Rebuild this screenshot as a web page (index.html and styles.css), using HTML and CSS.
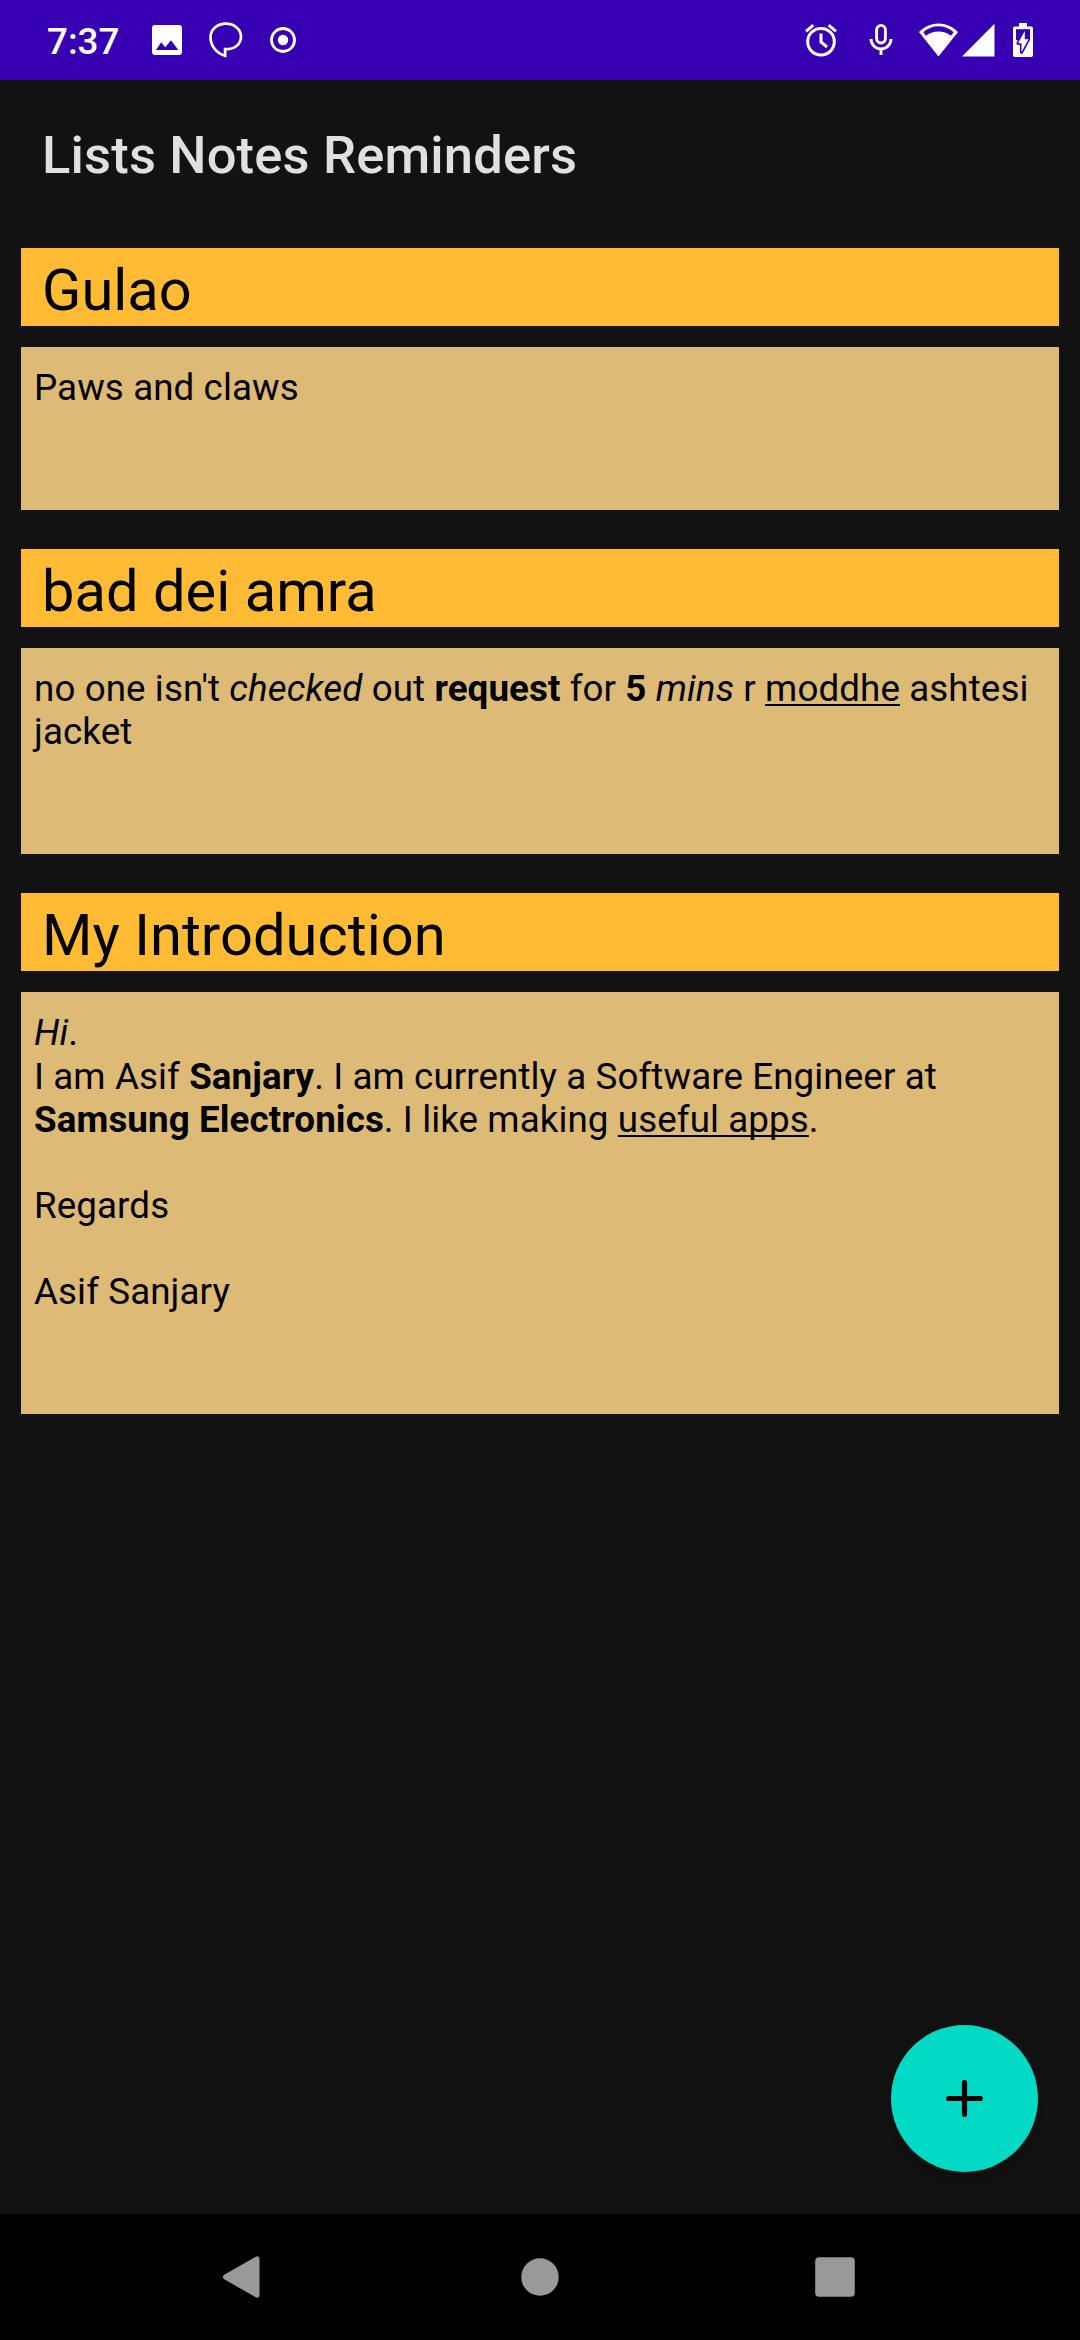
FILE: index.html
```html
<!DOCTYPE html>
<html lang="en">
<head>
<meta charset="utf-8">
<title>Lists Notes Reminders</title>
<link rel="stylesheet" href="styles.css">
</head>
<body>
<div class="screen">
  <header class="status">
    <span class="clock">7:37</span>
    <div class="status-left">
      <svg width="30" height="30" viewBox="0 0 30 30"><path fill="#fff" fill-rule="evenodd" d="M3 0h24A3 3 0 0 1 30 3v24a3 3 0 0 1-3 3H3A3 3 0 0 1 0 27V3a3 3 0 0 1 3-3zM4 25h22.300L19 15.200 13.300 22.300 9.200 17.300z"/></svg>
      <svg width="34" height="36" viewBox="0 0 34 36"><path fill="none" stroke="#fff" stroke-width="2.700" d="M17 1.700C8.500 1.700 1.500 7.500 1.500 15.200c0 8 5.500 16 14.600 18.600v-6.700C25.500 27.500 32 22.500 32 14.600 32 7.300 25.300 1.700 17 1.700z"/></svg>
      <svg width="26" height="26" viewBox="0 0 26 26"><circle cx="13" cy="13" r="11.500" fill="none" stroke="#fff" stroke-width="2.800"/><circle cx="13" cy="13" r="5.200" fill="#fff"/></svg>
    </div>
    <div class="status-right">
      <svg width="32" height="34" viewBox="0 0 32 34"><g fill="none" stroke="#fff" stroke-width="3"><circle cx="16" cy="18.700" r="13.300"/><path d="M1 8.300l7.300-6.200M31 8.300l-7.300-6.200M16 10.500v8.500l6 5"/></g></svg>
      <svg width="24" height="34" viewBox="0 0 24 34"><g fill="none" stroke="#fff" stroke-width="2.900"><rect x="7.600" y="2.400" width="8.800" height="17.600" rx="4.400"/><path d="M2 16a10 10 0 0 0 20 0M12 26v6"/></g></svg>
      <svg class="wifi" width="39" height="34" viewBox="0 0 39 34"><path fill="#fff" d="M0 9C11.500-2.300 27.500-2.300 39 9L19.500 33.500z"/><path fill="#3700b3" d="M4.300 9.200C13.500 1.300 25.500 1.300 34.700 9.200L32 12.700C24.500 7.200 14.500 7.200 7 12.700z"/></svg>
      <svg class="signal" width="33" height="34" viewBox="0 0 33 34"><path fill="#fff" d="M0 33.500h32.500V.8z"/></svg>
      <svg class="battery" width="20" height="34" viewBox="0 0 20 34"><path fill="#fff" d="M6 0h8v3.600h4.200A1.800 1.800 0 0 1 20 5.400v26.800a1.800 1.800 0 0 1-1.800 1.800H1.800A1.800 1.800 0 0 1 0 32.200V5.400a1.800 1.800 0 0 1 1.800-1.800H6z"/><path fill="#3700b3" d="M3 6.200h14v11H3z"/><path fill="#fff" stroke="#3700b3" stroke-width="3.200" stroke-linejoin="round" paint-order="stroke" d="M11.800 8V16.300H15.500L8.500 29.200V20.300H5z"/></svg>
    </div>
  </header>

  <main class="content">
    <h1 class="app-title">Lists Notes Reminders</h1>
    <article class="note">
      <h2 class="note-title">Gulao</h2>
      <div class="note-body"><p>Paws and claws</p></div>
    </article>
    <article class="note">
      <h2 class="note-title">bad dei amra</h2>
      <div class="note-body"><p>no one isn't <i>checked</i> out <b>request</b> for <b>5</b> <i>mins</i> r <u>moddhe</u> ashtesi jacket</p></div>
    </article>
    <article class="note">
      <h2 class="note-title">My Introduction</h2>
      <div class="note-body"><p class="greeting"><i>Hi</i>.</p><p>I am Asif <b>Sanjary</b>. I am currently a Software Engineer at <b>Samsung Electronics</b>. I like making <u>useful apps</u>.<br><br>Regards<br><br>Asif Sanjary</p></div>
    </article>
    <button class="fab" aria-label="Add"><svg width="37" height="37" viewBox="0 0 37 37"><path fill="none" stroke="#000" stroke-width="5.200" stroke-linecap="round" d="M18.500 2.700v31.600M2.700 18.500h31.600"/></svg></button>
  </main>

  <nav class="navbar">
    <svg width="44" height="44" viewBox="0 0 44 44"><path fill="#999" stroke="#999" stroke-width="5" stroke-linejoin="round" d="M4.500 22L36 3.800v36.400z"/></svg>
    <svg width="40" height="44" viewBox="0 0 40 44"><circle cx="20" cy="22" r="18.700" fill="#999"/></svg>
    <svg width="40" height="44" viewBox="0 0 40 44"><rect x=".2" y="2.200" width="39.600" height="39.600" rx="4" fill="#999"/></svg>
  </nav>
</div>
</body>
</html>
```
FILE: styles.css
```css
* { box-sizing: border-box; }
body { margin: 0; background: #121212; font-family: Roboto, "Noto Sans", sans-serif; }
h1, h2, p { margin: 0; }
svg { display: block; flex: none; }

.screen { display: flex; flex-direction: column; width: 1080px; height: 2340px; }

.status {
  display: flex;
  align-items: center;
  height: 80px;
  padding: 0 47px;
  background: #3700b3;
  color: #fff;
}
.clock { width: 105px; font-size: 36.75px; font-weight: 500; line-height: 43px; padding-top: 2px; }
.status-left { display: flex; align-items: center; gap: 27px; }
.status-right { display: flex; align-items: center; margin-left: auto; }
.status-right svg + svg { margin-left: 32px; }
.status-right svg.wifi { margin-left: 26px; }
.status-right svg.signal { margin-left: 4px; }
.status-right svg.battery { margin-left: 18px; }

.content { position: relative; flex: 1; padding: 0 21px; }
.app-title {
  height: 168px;
  padding: 44px 21px 0;
  color: #e0e0e0;
  font-size: 52.5px;
  font-weight: 500;
  line-height: 62px;
  letter-spacing: 0.16px;
}

.note { display: flex; flex-direction: column; gap: 21px; margin-bottom: 39px; color: #000; }
.note-title {
  height: 78px;
  padding: 8px 21px 0;
  background: #ffbb33;
  font-size: 57.75px;
  font-weight: 400;
  line-height: 68px;
  letter-spacing: 0.05px;
}
.note-body {
  padding: 19px 13px 101px;
  background: #ddba76;
  font-size: 36.75px;
  line-height: 43px;
  letter-spacing: 0.09px;
}
.note-body b { font-weight: 700; }
.note-body u { text-decoration-thickness: 2px; text-underline-offset: 3px; text-decoration-skip-ink: none; }
.greeting { padding-bottom: 1px; }

.fab {
  position: absolute;
  right: 42px;
  bottom: 42px;
  display: grid;
  place-items: center;
  width: 147px;
  height: 147px;
  padding: 0;
  border: 0;
  border-radius: 50%;
  background: #03dac5;
  box-shadow: 0 12px 22px rgba(0, 0, 0, 0.2);
}

.navbar {
  display: flex;
  align-items: center;
  justify-content: space-between;
  height: 126px;
  padding: 0 225px 0 221px;
  background: #000;
}
```
